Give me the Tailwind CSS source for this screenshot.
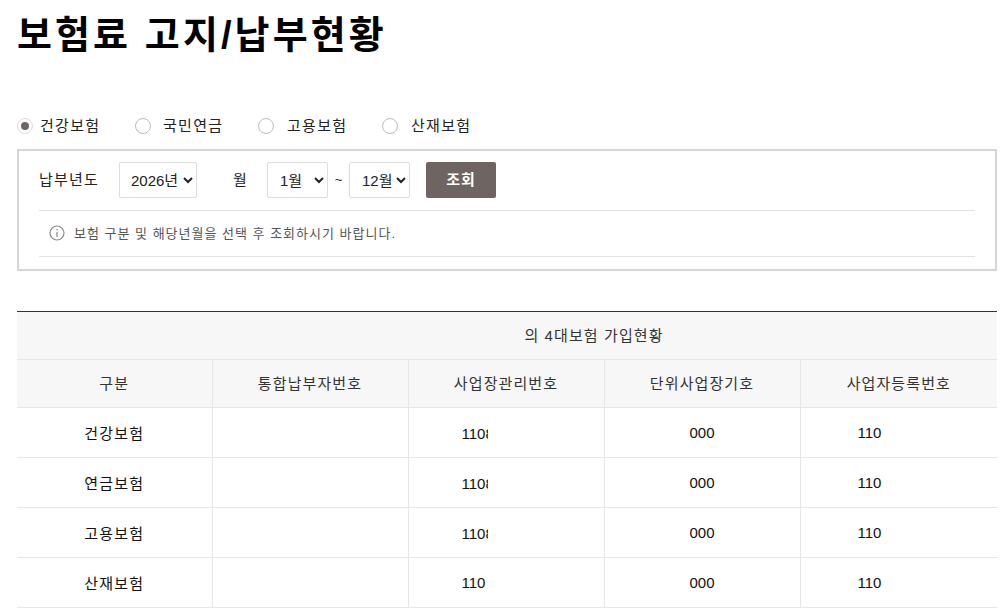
<!DOCTYPE html>
<html lang="ko">
<head>
  <meta charset="UTF-8">
  <title>보험료 고지/납부현황</title>
  <script src="https://cdn.jsdelivr.net/npm/@tailwindcss/browser@4"></script>
</head>
<body class="bg-white overflow-hidden font-['Liberation_Sans','Noto_Sans_CJK_KR',sans-serif] text-[#222]">
  <div class="w-[1005px] h-[612px] overflow-hidden pl-[17px] pr-2">
    <h1 class="h-[70px] pt-[10px] text-[38px] leading-[50px] font-bold text-black tracking-[3.1px]">보험료 고지/납부현황</h1>

    <!-- 보험 구분 -->
    <div class="flex items-center h-[28px] mt-[42px] text-[15px] tracking-[1.3px] text-[#222]">
      <span class="w-4 h-4 rounded-full border border-[#ddd] flex items-center justify-center"><span class="w-2 h-2 rounded-full bg-[#6e6462]"></span></span>
      <span class="ml-[7px] w-[95px]">건강보험</span>
      <span class="w-4 h-4 rounded-full border border-[#bbb]"></span>
      <span class="ml-[12px] w-[95px]">국민연금</span>
      <span class="w-4 h-4 rounded-full border border-[#bbb]"></span>
      <span class="ml-[13px] w-[95px]">고용보험</span>
      <span class="w-4 h-4 rounded-full border border-[#bbb]"></span>
      <span class="ml-[13px]">산재보험</span>
    </div>

    <!-- 조회 조건 -->
    <div class="mt-[9px] h-[122px] border-2 border-[#d5d5d5] px-5 pt-[11px]">
      <div class="flex items-center h-[36px] text-[15px]">
        <span class="w-[80px] tracking-[1.2px]">납부년도</span>
        <select class="w-[78px] h-[36px] border border-[#ddd] rounded-[2px] pl-[7px] text-[15px] bg-white">
          <option>2026년</option>
        </select>
        <span class="ml-[36px] w-[34px]">월</span>
        <select class="w-[61px] h-[36px] border border-[#ddd] rounded-[2px] pl-2 text-[15px] bg-white">
          <option>1월</option>
        </select>
        <span class="w-[21px] text-center text-[13px]">~</span>
        <select class="w-[61px] h-[36px] border border-[#ddd] rounded-[2px] pl-2 text-[15px] bg-white">
          <option>12월</option>
        </select>
        <button class="ml-[16px] w-[70px] h-[36px] rounded-[2px] bg-[#6e6462] text-white text-[15px] font-bold tracking-[1px]">조회</button>
      </div>
      <div class="mt-3 h-[47px] border-y border-[#e3e3e3] flex items-center pl-[10px] text-[13px] tracking-[1px] text-[#555]">
        <svg class="w-4 h-4 mr-[9px] -mt-[1px] text-[#888]" viewBox="0 0 16 16" fill="none" stroke="currentColor" stroke-width="1.200">
          <circle cx="8" cy="8" r="7"></circle>
          <path d="M8 7v5M8 4v1.500"></path>
        </svg>
        <span class="pt-[1px]">보험 구분 및 해당년월을 선택 후 조회하시기 바랍니다.</span>
      </div>
    </div>

    <!-- 가입현황 -->
    <table class="mt-[40px] w-[980px] table-fixed border-t border-[#333] border-collapse text-[15px] text-center">
      <colgroup>
        <col class="w-[195px]">
        <col class="w-[196px]">
        <col class="w-[196px]">
        <col class="w-[196px]">
        <col class="w-[197px]">
      </colgroup>
      <thead class="bg-[#f7f7f7] text-[#333] tracking-[1.1px]">
        <tr class="h-[48px] border-b border-[#e6e6e6]">
          <th colspan="5" class="font-normal pl-[174px] pt-[1px]">의 4대보험 가입현황</th>
        </tr>
        <tr class="h-[48px] border-b border-[#e6e6e6]">
          <th class="font-normal pt-[2px]">구분</th>
          <th class="font-normal pt-[2px] border-l border-[#e6e6e6]">통합납부자번호</th>
          <th class="font-normal pt-[2px] border-l border-[#e6e6e6]">사업장관리번호</th>
          <th class="font-normal pt-[2px] border-l border-[#e6e6e6]">단위사업장기호</th>
          <th class="font-normal pt-[2px] border-l border-[#e6e6e6]">사업자등록번호</th>
        </tr>
      </thead>
      <tbody class="text-[#111]">
        <tr class="h-[50px] border-b border-[#e6e6e6]">
          <td class="pt-[3px] tracking-[1.2px]">건강보험</td>
          <td class="border-l border-[#e6e6e6]"></td>
          <td class="pt-[2px] border-l border-[#e6e6e6] text-left pl-[53px]"><span class="inline-block w-[26px] overflow-hidden align-middle">1108</span></td>
          <td class="pt-[2px] border-l border-[#e6e6e6]">000</td>
          <td class="pt-[2px] border-l border-[#e6e6e6] text-left pl-[57px]">110</td>
        </tr>
        <tr class="h-[50px] border-b border-[#e6e6e6]">
          <td class="pt-[3px] tracking-[1.2px]">연금보험</td>
          <td class="border-l border-[#e6e6e6]"></td>
          <td class="pt-[2px] border-l border-[#e6e6e6] text-left pl-[53px]"><span class="inline-block w-[26px] overflow-hidden align-middle">1108</span></td>
          <td class="pt-[2px] border-l border-[#e6e6e6]">000</td>
          <td class="pt-[2px] border-l border-[#e6e6e6] text-left pl-[57px]">110</td>
        </tr>
        <tr class="h-[50px] border-b border-[#e6e6e6]">
          <td class="pt-[3px] tracking-[1.2px]">고용보험</td>
          <td class="border-l border-[#e6e6e6]"></td>
          <td class="pt-[2px] border-l border-[#e6e6e6] text-left pl-[53px]"><span class="inline-block w-[26px] overflow-hidden align-middle">1108</span></td>
          <td class="pt-[2px] border-l border-[#e6e6e6]">000</td>
          <td class="pt-[2px] border-l border-[#e6e6e6] text-left pl-[57px]">110</td>
        </tr>
        <tr class="h-[50px] border-b border-[#e6e6e6]">
          <td class="pt-[3px] tracking-[1.2px]">산재보험</td>
          <td class="border-l border-[#e6e6e6]"></td>
          <td class="pt-[2px] border-l border-[#e6e6e6] text-left pl-[53px]">110</td>
          <td class="pt-[2px] border-l border-[#e6e6e6]">000</td>
          <td class="pt-[2px] border-l border-[#e6e6e6] text-left pl-[57px]">110</td>
        </tr>
      </tbody>
    </table>
  </div>
</body>
</html>
